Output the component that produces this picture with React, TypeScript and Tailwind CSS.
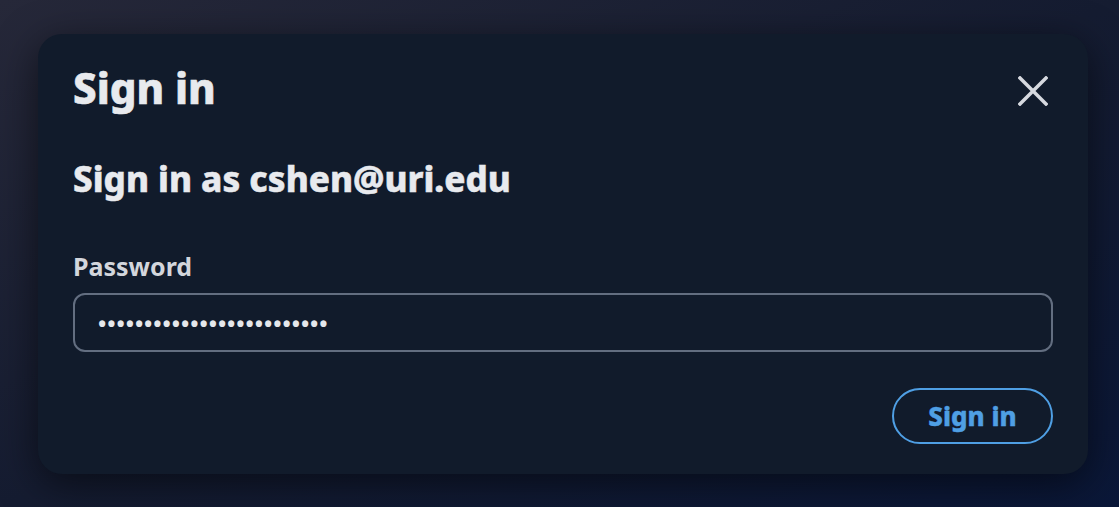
import React from "react";

const font = { fontFamily: '"Noto Sans", "Open Sans", sans-serif' };

export default function App() {
  return (
    <div
      className="w-[1119px] h-[507px] overflow-hidden bg-gradient-to-br from-[#262839] via-[#151c31] to-[#0a1738] pt-[34px] pl-[38px]"
      style={font}
    >
      <div className="w-[1050px] h-[440px] rounded-[24px] bg-[#111b2b] shadow-[0_10px_40px_rgba(0,0,0,0.55)] pl-[35px] pr-[35px] pt-[26px] flex flex-col">
        <div className="flex items-center justify-between">
          <h1 className="text-[42px] leading-[56px] font-extrabold text-[#e8eaee] [-webkit-text-stroke:0.6px_#e8eaee]">Sign in</h1>
          <button className="mt-[6px] w-[40px] h-[40px] flex items-center justify-center text-[#d6d9df]">
            <svg width="30" height="30" viewBox="0 0 30 30" fill="none" stroke="currentColor" strokeWidth="3.5" strokeLinecap="square">
              <path d="M2 2 L28 28 M28 2 L2 28" />
            </svg>
          </button>
        </div>
        <h2 className="mt-[43px] text-[35px] leading-[40px] font-extrabold text-[#e8eaee] [-webkit-text-stroke:0.5px_#e8eaee]">Sign in as cshen@uri.edu</h2>
        <label className="mt-[52px] text-[25px] leading-[30px] font-bold text-[#d3d6dc]">Password</label>
        <input
          type="password"
          defaultValue="abcdefghijklmnopqrstuvwxy"
          className="mt-[12px] h-[59px] w-full rounded-[12px] border-2 border-[#636e80] bg-transparent px-[23px] text-[22px] font-bold tracking-[0.95px] text-[#e5e7eb] outline-none"
          style={font}
          readOnly
        />
        <div className="mt-[36px] flex justify-end">
          <button className="h-[56px] w-[161px] rounded-full border-2 border-[#4f9fe4] text-[#4f9fe4] text-[26px] font-extrabold [-webkit-text-stroke:0.4px_#4f9fe4]">
            Sign in
          </button>
        </div>
      </div>
    </div>
  );
}
